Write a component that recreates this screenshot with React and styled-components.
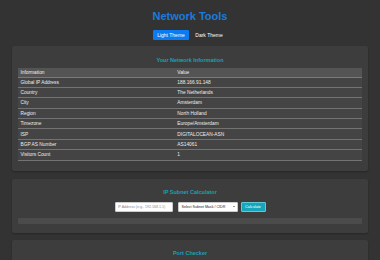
import styled, { createGlobalStyle } from 'styled-components';

const GlobalStyle = createGlobalStyle`
  html, body {
    margin: 0;
    padding: 0;
    background: #333333;
    font-family: "Liberation Sans", Arial, sans-serif;
    color: #e8e8e8;
  }
`;

const Page = styled.div`
  padding: 10px 12px 0;
`;

const Title = styled.h1`
  margin: 0;
  text-align: center;
  font-size: 11px;
  line-height: 13px;
  font-weight: bold;
  color: #1b7bdc;
`;

const ThemeBar = styled.div`
  display: flex;
  justify-content: center;
  gap: 2px;
  margin-top: 6.5px;
`;

const ThemeButton = styled.button`
  width: 36px;
  height: 10px;
  padding: 0;
  border: none;
  border-radius: 1px;
  font-family: inherit;
  font-size: 5px;
  color: #ffffff;
  background: ${(p) => (p.$active ? '#0b7bf2' : 'transparent')};
`;

const Card = styled.section`
  margin-top: ${(p) => p.$gap || 8}px;
  padding: 10.5px 6px ${(p) => p.$bottom || 10}px;
  background: #3d3d3d;
  border-radius: 2px;
  box-shadow: 0 1px 2px rgba(0, 0, 0, 0.25);
`;

const CardTitle = styled.h2`
  margin: 0 0 ${(p) => p.$space || 4.5}px;
  text-align: center;
  font-size: 5.5px;
  line-height: 7px;
  font-weight: bold;
  color: #1aa0b8;
`;

const Table = styled.table`
  width: 100%;
  border-collapse: collapse;
  font-size: 4.8px;
`;

const HeadRow = styled.tr`
  height: 9px;
`;

const BodyRow = styled.tr`
  height: 10.4px;
`;

const HeadCell = styled.th`
  padding: 0 2.5px;
  text-align: left;
  font-weight: normal;
  color: #f0f0f0;
  background: #545454;
  border-bottom: 1px solid #7a7a7a;
  width: ${(p) => p.$w || 'auto'};
`;

const Cell = styled.td`
  padding: 0 2.5px;
  color: #eeeeee;
  background: #444444;
  border-bottom: 1px solid #737373;
`;

const CalcRow = styled.div`
  display: flex;
  justify-content: center;
  align-items: center;
  gap: 5px;
`;

const IpInput = styled.input`
  box-sizing: border-box;
  width: 58px;
  height: 10px;
  padding: 0 2px;
  border: 1px solid #cccccc;
  border-radius: 1px;
  background: #ffffff;
  font-family: inherit;
  font-size: 3.6px;
  color: #333333;
  &::placeholder {
    color: #8a8a8a;
  }
`;

const SubnetSelect = styled.div`
  box-sizing: border-box;
  display: flex;
  align-items: center;
  justify-content: space-between;
  width: 60px;
  height: 10px;
  padding: 0 2px 0 3px;
  border: 1px solid #cccccc;
  border-radius: 1px;
  background: #ffffff;
  font-size: 3.6px;
  color: #222222;
`;

const Arrow = styled.span`
  width: 0;
  height: 0;
  border-left: 1.3px solid transparent;
  border-right: 1.3px solid transparent;
  border-top: 1.6px solid #333333;
`;

const CalcButton = styled.button`
  box-sizing: border-box;
  width: 25px;
  height: 10px;
  margin-left: -2px;
  padding: 0;
  border: 1px solid #62c9d8;
  border-radius: 1px;
  background: #17a5bb;
  font-family: inherit;
  font-size: 3.8px;
  color: #ffffff;
`;

const ResultBar = styled.div`
  height: 6px;
  margin-top: 6px;
  background: #4b4b4b;
  border-radius: 1px;
`;

const rows = [
  ['Global IP Address', '188.166.91.148'],
  ['Country', 'The Netherlands'],
  ['City', 'Amsterdam'],
  ['Region', 'North Holland'],
  ['Timezone', 'Europe/Amsterdam'],
  ['ISP', 'DIGITALOCEAN-ASN'],
  ['BGP AS Number', 'AS14061'],
  ['Visitors Count', '1'],
];

const App = () => {
  return (
    <>
      <GlobalStyle />
      <Page>
        <Title>Network Tools</Title>
        <ThemeBar>
          <ThemeButton $active>Light Theme</ThemeButton>
          <ThemeButton>Dark Theme</ThemeButton>
        </ThemeBar>

        <Card $gap={6.5}>
          <CardTitle>Your Network Information</CardTitle>
          <Table>
            <thead>
              <HeadRow>
                <HeadCell $w="45.6%">Information</HeadCell>
                <HeadCell>Value</HeadCell>
              </HeadRow>
            </thead>
            <tbody>
              {rows.map(([label, value]) => (
                <BodyRow key={label}>
                  <Cell>{label}</Cell>
                  <Cell>{value}</Cell>
                </BodyRow>
              ))}
            </tbody>
          </Table>
        </Card>

        <Card $bottom={9}>
          <CardTitle $space={5.5}>IP Subnet Calculator</CardTitle>
          <CalcRow>
            <IpInput placeholder="IP Address (e.g., 192.168.1.1)" />
            <SubnetSelect>
              <span>Select Subnet Mask / CIDR</span>
              <Arrow />
            </SubnetSelect>
            <CalcButton>Calculate</CalcButton>
          </CalcRow>
          <ResultBar />
        </Card>

        <Card $gap={7}>
          <CardTitle>Port Checker</CardTitle>
        </Card>
      </Page>
    </>
  );
};

export default App;
